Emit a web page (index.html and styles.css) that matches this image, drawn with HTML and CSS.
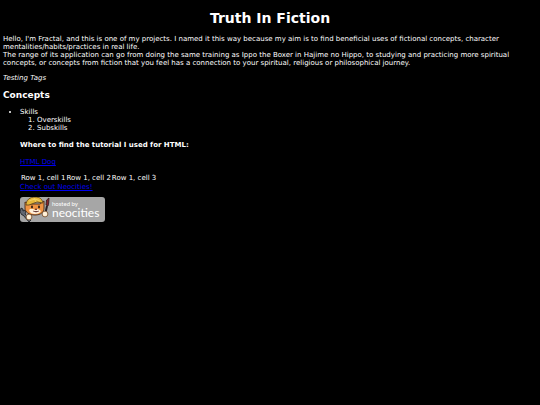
FILE: index.html
```
<!DOCTYPE html>
<html lang="en">
<head>
    <meta charset="UTF-8">
    <meta name="viewport" content="width=device-width, initial-scale=1.0">
    <title>Truth In Fiction</title>
    <link rel="stylesheet" href="styles.css">
</head>
<body>
    <h1>Truth In Fiction</h1>
    <p>
        Hello, I'm Fractal, and this is one of my projects. I named it this way because my aim is to find beneficial uses of fictional concepts, character mentalities/habits/practices in real life.<br>
        The range of its application can go from doing the same training as Ippo the Boxer in Hajime no Hippo, to studying and practicing more spiritual concepts, or concepts from fiction that you feel has a connection to your spiritual, religious or philosophical journey.
    </p>
    <p><em>Testing Tags</em></p>
    <h2>Concepts</h2>
    <ul>
        <li>Skills
            <ol>
                <li>Overskills</li>
                <li>Subskills</li>
            </ol>
        </li>
    </ul>
    <div class="links">
        <h3>Where to find the tutorial I used for HTML:</h3>
        <p><a href="https://www.htmldog.com">HTML Dog</a></p>
        <table>
            <tr>
                <td>Row 1, cell 1</td>
                <td>Row 1, cell 2</td>
                <td>Row 1, cell 3</td>
            </tr>
        </table>
        <a href="https://neocities.org/browse">Check out Neocities!</a>
        <a class="badge" href="https://neocities.org" aria-label="Hosted by Neocities">
            <svg viewBox="0 0 85 25" aria-hidden="true">
                <rect width="85" height="25" rx="3" fill="#a6a6a6"/>
                <!-- wrench -->
                <path d="M1 11l2 1v2l2-1 1 2-1 2 6 6-2 2-6-7H2L0 15z" fill="#626771" stroke="#17191d" stroke-width=".8"/>
                <!-- brush -->
                <path d="M27 9l-2 9" stroke="#292126" stroke-width="2"/>
                <path d="M26 8l.6-5L29 1l-.3 5L28 9z" fill="#87262b" stroke="#30171b" stroke-width=".8"/>
                <!-- cat -->
                <path d="M5 5l4 2h11l4-3v7c0 4-3 7-9 7s-10-3-10-7z" fill="#ef9342" stroke="#482b17" stroke-width=".9"/>
                <path d="M9 13c2-2 4-1 6 0 2-1 4-1 6 1-1 2-3 3-6 3s-5-1-6-4z" fill="#fff0d8"/>
                <path d="M6 8c0-5 4-8 9-8 5 0 7 2 8 6l-6-1-8 3z" fill="#e5b83b" stroke="#654719" stroke-width=".9"/>
                <path d="M9 4l6-2 5 2M14 1l2 4" fill="none" stroke="#f5d66c" stroke-width=".8"/>
                <ellipse cx="12" cy="10" rx="1" ry="1.4" fill="#33231b"/>
                <ellipse cx="19" cy="10" rx="1" ry="1.4" fill="#33231b"/>
                <path d="M15 12h2l-1 1zM13 14l3 1 3-1" fill="#5a2928" stroke="#5a2928" stroke-width=".6"/>
                <circle cx="9" cy="20" r="2.9" fill="#fff1d8" stroke="#6c421f" stroke-width=".8"/>
                <circle cx="25" cy="17" r="2.9" fill="#fff1d8" stroke="#6c421f" stroke-width=".8"/>
                <text class="badge-small" x="32" y="9">hosted by</text>
                <text class="badge-name" x="32" y="20">neocities</text>
            </svg>
        </a>
    </div>
</body>
</html>
```

FILE: styles.css
```
body {
    margin: 0;
    padding: 10px 3px;
    background: #000;
    color: #fff;
    font-family: Verdana, "DejaVu Sans", sans-serif;
    font-size: 7px;
    line-height: 8px;
}

h1 {
    margin: 0 0 9px;
    font-size: 14px;
    line-height: 16px;
    text-align: center;
}

p {
    margin: 0 0 7px;
}

h2 {
    margin: 8px 0;
    font-size: 9px;
    line-height: 10px;
}

h3 {
    margin: 9px 0;
    font-size: 7px;
    line-height: 8px;
}

ul,
ol {
    margin: 0;
    padding-left: 17px;
}

a {
    color: #0000ee;
}

.links {
    padding-left: 17px;
}

table {
    border-spacing: 1px;
}

td {
    padding: 0;
}

.badge {
    display: block;
    width: 85px;
    margin-top: 6px;
}

.badge svg {
    display: block;
    width: 100%;
}

.badge text {
    fill: #fff;
    font-family: Lato, "Open Sans", sans-serif;
}

.badge-small {
    font-size: 6px;
}

.badge-name {
    font-size: 12px;
}
```
